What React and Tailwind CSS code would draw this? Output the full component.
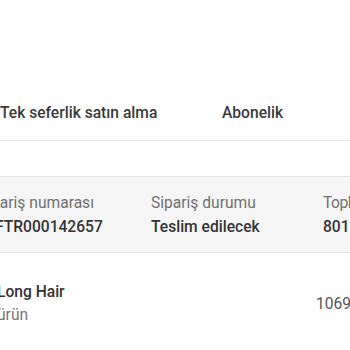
export default function App() {
  return (
    <div className="w-[350px] h-[350px] overflow-hidden bg-white font-['Roboto',sans-serif] text-[15.6px] leading-[22px]">
      {/* Purchase type tabs */}
      <div className="pt-[102px] pb-[16px] border-b border-[#e3e3e3] flex">
        <div className="w-[222px] shrink-0 font-medium text-[#3a3a3a]">Tek seferlik satın alma</div>
        <div className="font-medium text-[#3a3a3a]">Abonelik</div>
      </div>

      {/* Order summary */}
      <div className="mt-[35px] bg-[#f6f6f6] border-y border-[#e3e3e3] pt-[15px] pb-[14px]">
        <div className="flex ml-[-22px] whitespace-nowrap">
          <div className="w-[173px] shrink-0">
            <div className="text-[#707070]">Sipariş numarası</div>
            <div className="mt-[2px] ml-[17px] font-medium text-[#333]">FTR000142657</div>
          </div>
          <div className="w-[172px] shrink-0">
            <div className="text-[#707070]">Sipariş durumu</div>
            <div className="mt-[2px] font-medium text-[#333]">Teslim edilecek</div>
          </div>
          <div className="shrink-0">
            <div className="text-[#707070] tracking-[-0.5px]">Toplam</div>
            <div className="mt-[2px] font-medium text-[#333]">801 TL</div>
          </div>
        </div>
      </div>

      {/* Product line */}
      <div className="mt-[28px] flex items-center whitespace-nowrap">
        <div className="w-[319px] shrink-0 ml-[-3px]">
          <div className="font-medium text-[#333]">Long Hair</div>
          <div className="mt-[1px] text-[#777]">ürün</div>
        </div>
        <div className="text-[#555]">1069</div>
      </div>
    </div>
  )
}
